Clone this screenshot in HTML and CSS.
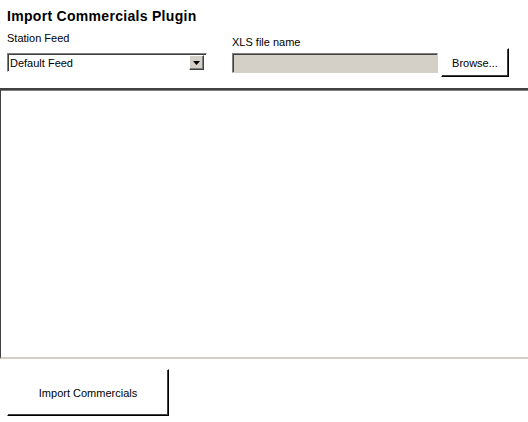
FILE: index.html
```html
<!DOCTYPE html>
<html lang="en">
  <head>
    <meta charset="UTF-8" />
    <title>Import Commercials Plugin</title>
    <link rel="stylesheet" href="styles.css">
  </head>

  <body>
    <div class="plugin">
      <h1 class="plugin__title">Import Commercials Plugin</h1>

      <div class="fields">
        <div class="field field--feed">
          <label class="field__label" for="feed">Station Feed</label>
          <div class="combo" id="feed">
            <span class="combo__value">Default Feed</span>
            <span class="combo__arrow">
              <svg width="7" height="4" viewBox="0 0 7 4"><path d="M0 0h7L3.5 4z" fill="#000"/></svg>
            </span>
          </div>
        </div>

        <div class="field field--file">
          <label class="field__label" for="xls">XLS file name</label>
          <div class="file-row">
            <input class="file-input" type="text" id="xls" disabled />
            <button class="win-btn win-btn--browse">Browse...</button>
          </div>
        </div>
      </div>

      <div class="results"></div>

      <div class="actions">
        <button class="win-btn win-btn--import">Import Commercials</button>
      </div>
    </div>
  </body>
</html>
```

FILE: styles.css
```css
html {
  box-sizing: border-box;
}

*,
*:before,
*:after {
  box-sizing: inherit;
}

body {
  margin: 0;
  background: #fff;
  font-family: "Liberation Sans", Arial, sans-serif;
  font-size: 11px;
  color: #000;
}

.plugin {
  width: 528px;
  height: 422px;
}

.plugin__title {
  margin: 0;
  padding: 8px 0 0 7px;
  font-size: 14px;
  font-weight: bold;
  letter-spacing: 0.3px;
  line-height: 16px;
}

/* top row with feed + file name */
.fields {
  display: flex;
  padding: 0 0 0 7px;
  height: 64px;
}

.field {
  display: flex;
  flex-direction: column;
}

.field--feed {
  width: 200px;
  padding-top: 8px;
}

.field--file {
  margin-left: 25px;
  padding-top: 12px;
}

.field__label {
  line-height: 12px;
  height: 12px;
}

.field--feed .field__label {
  margin-bottom: 9px;
}

.combo {
  display: flex;
  align-items: center;
  width: 200px;
  height: 19px;
  border: 1px solid;
  border-color: #808080 #fff #fff #808080;
  box-shadow: inset 1px 1px 0 #404040;
  padding: 0 2px 0 2px;
}

.combo__value {
  flex: 1;
  padding-top: 1px;
}

.combo__arrow {
  display: flex;
  align-items: center;
  justify-content: center;
  width: 15px;
  height: 15px;
  background: #d4d0c8;
  border: 1px solid;
  border-color: #fff #404040 #404040 #fff;
  box-shadow: inset -1px -1px 0 #808080;
}

.file-row {
  display: flex;
  align-items: flex-start;
}

.file-input {
  width: 206px;
  height: 20px;
  margin: 5px 3px 0 0;
  background: #d4d0c8;
  border: 1px solid;
  border-color: #808080 #d4d0c8 #d4d0c8 #808080;
  box-shadow: inset 1px 1px 0 #404040;
  padding: 0;
}

.win-btn {
  font-family: "Liberation Sans", Arial, sans-serif;
  font-size: 11px;
  color: #000;
  background: #fff;
  border: 1px solid;
  border-color: #fff #000 #000 #fff;
  box-shadow: inset -1px -1px 0 #404040;
  padding: 0;
  cursor: pointer;
}

.win-btn--browse {
  width: 68px;
  height: 29px;
}

/* list area */
.results {
  height: 271px;
  border-top: 2px solid #404040;
  border-left: 1px solid #404040;
  border-bottom: 2px solid #d4d0c8;
  box-shadow: inset 0 1px 0 #808080;
}

.actions {
  padding: 10px 0 0 7px;
}

.win-btn--import {
  width: 162px;
  height: 47px;
}
```
